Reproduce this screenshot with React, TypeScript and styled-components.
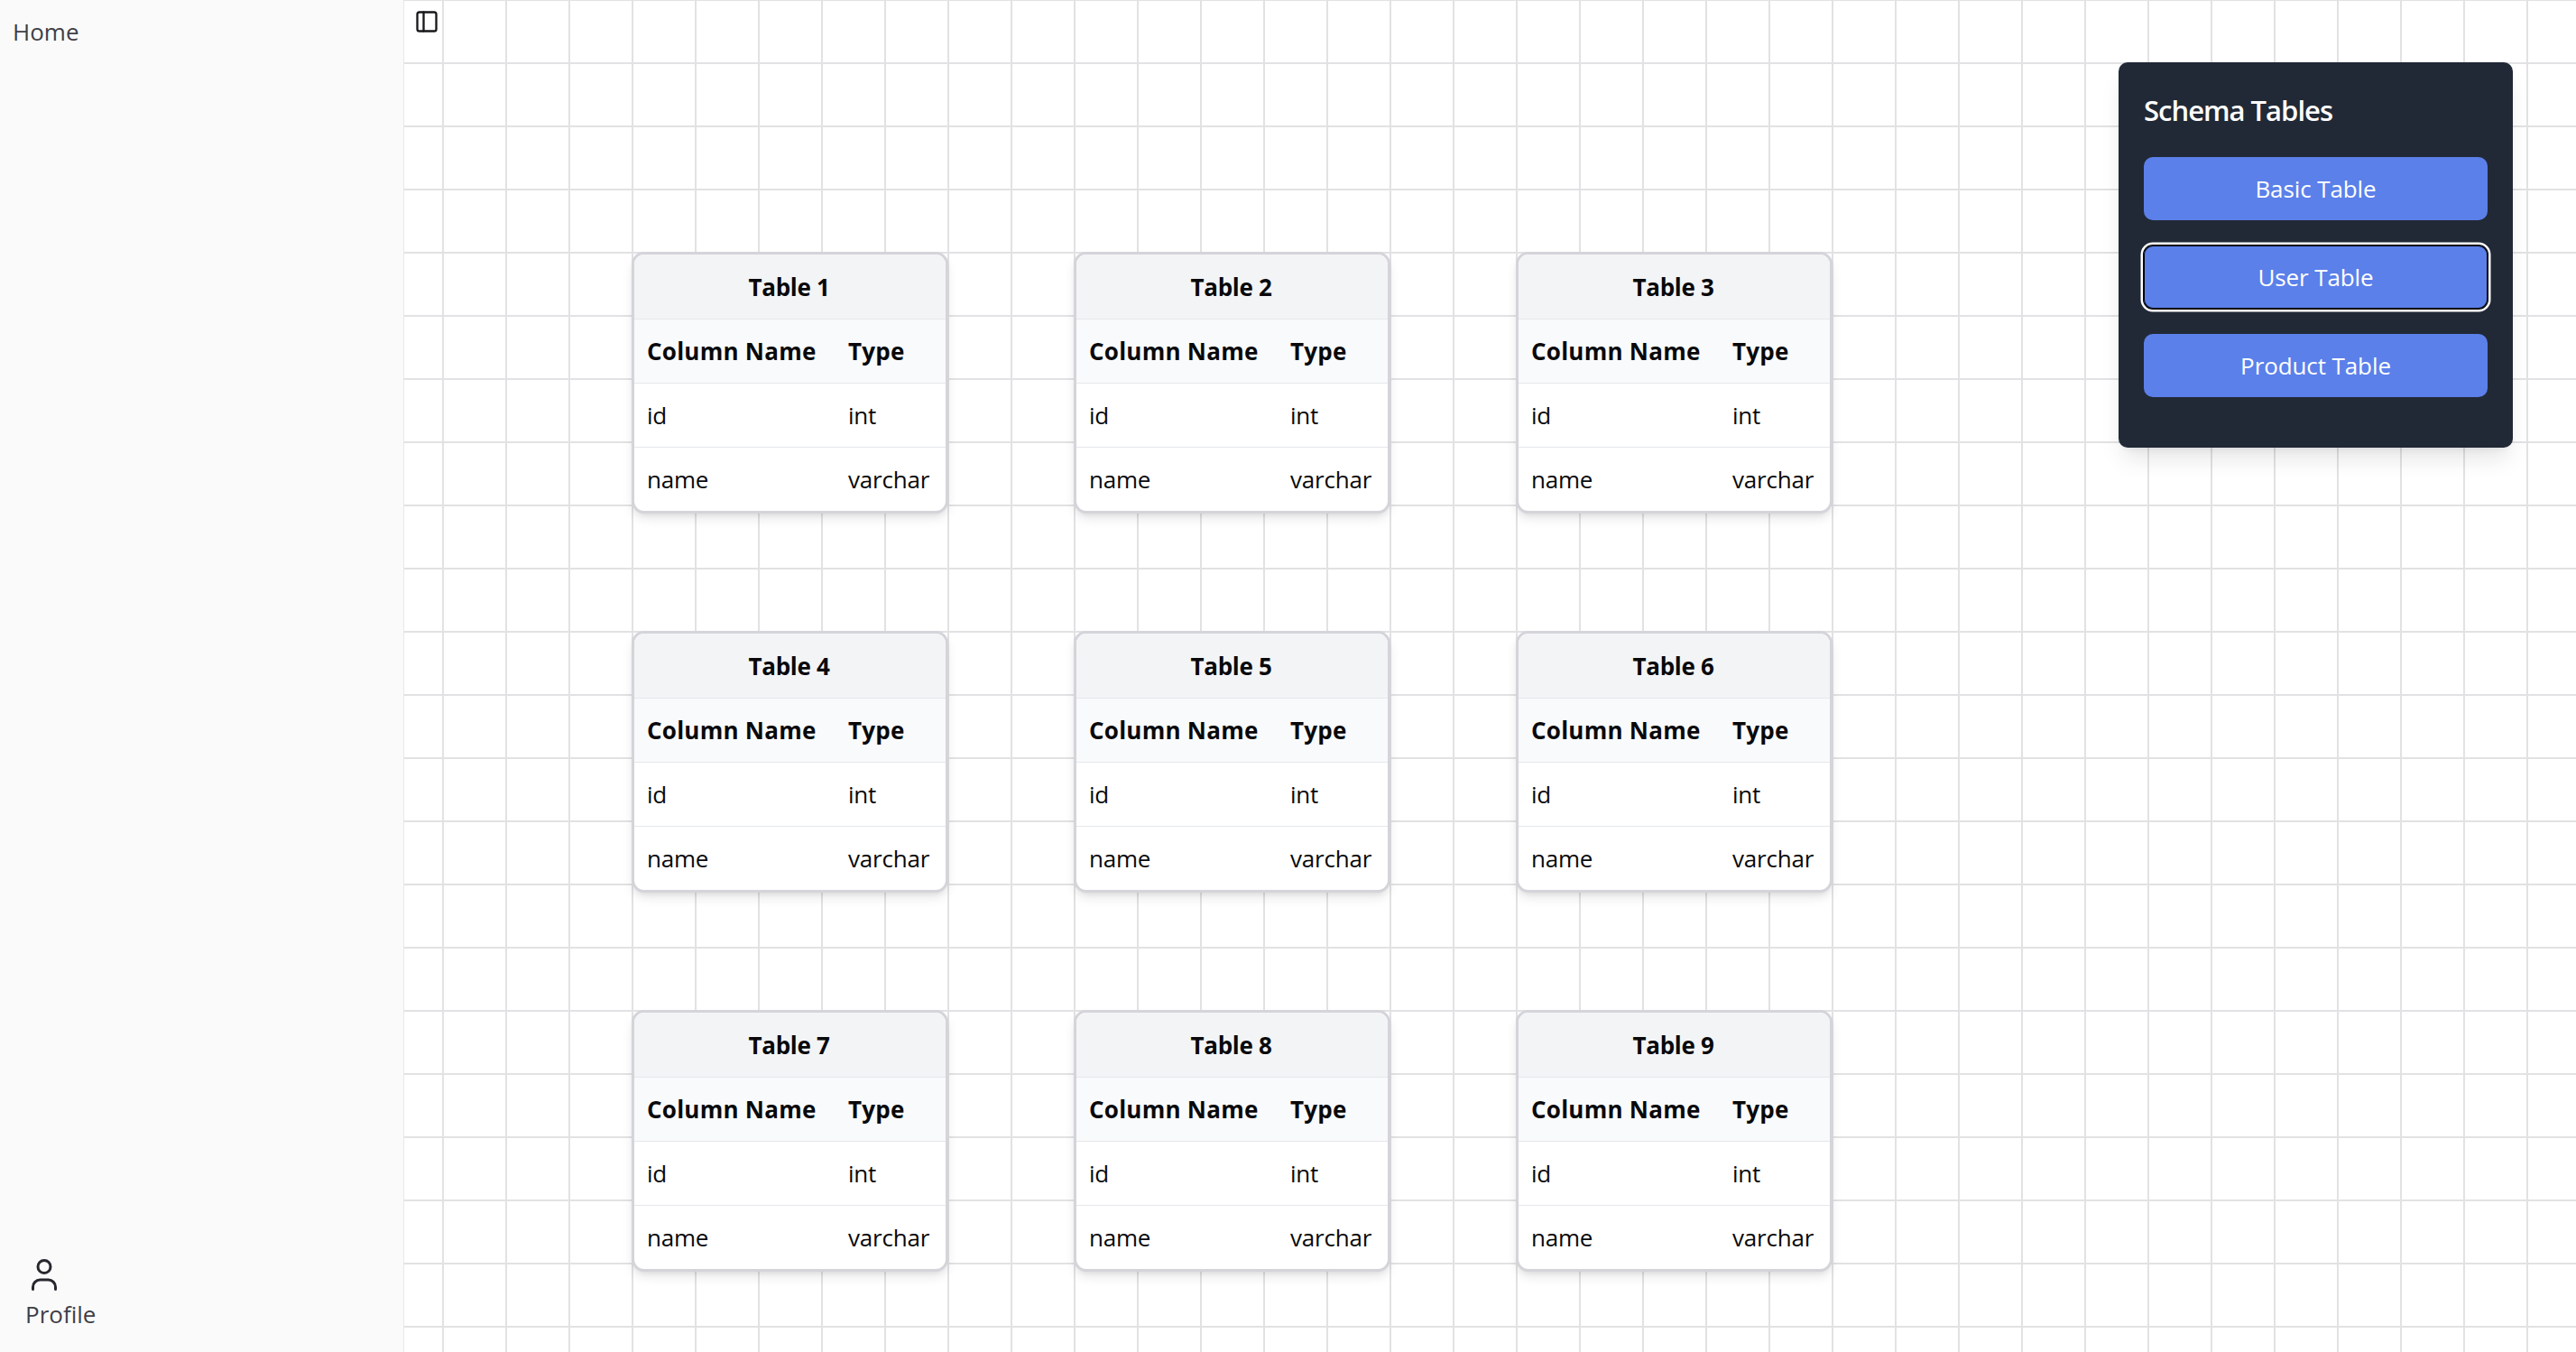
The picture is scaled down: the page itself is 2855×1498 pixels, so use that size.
import React from "react";
import styled, { createGlobalStyle } from "styled-components";
import { PanelLeft } from "lucide-react";

const Global = createGlobalStyle`
  html, body { margin: 0; padding: 0; height: 100%; overflow: hidden; }
  body {
    font-family: "Open Sans", "Noto Sans", "Liberation Sans", sans-serif;
    background-color: #fff;
    background-image:
      linear-gradient(to right, #e2e2e4 2px, transparent 2px),
      linear-gradient(to bottom, #e2e2e4 2px, transparent 2px);
    background-size: 70px 70px;
    background-position: 0 -1px;
  }
`;

const Page = styled.div`
  display: flex;
  width: 2855px;
  height: 1498px;
`;

const Sidebar = styled.aside`
  width: 448px;
  box-sizing: border-box;
  background: #fafafa;
  border-right: 1px solid #e8e8ea;
  display: flex;
  flex-direction: column;
  justify-content: space-between;
  color: #3f3f46;
  font-size: 26px;
`;

const HomeLink = styled.div`
  padding: 18px 14px;
  line-height: 34px;
`;

const ProfileBlock = styled.div`
  padding: 0 28px 25px;
  display: flex;
  flex-direction: column;
  align-items: flex-start;
  line-height: 34px;
`;

const ProfileIcon = styled.svg`
  display: block;
  width: 28px;
  height: 35px;
  margin: 0 0 9px 7px;
  color: #27272f;
`;

const Canvas = styled.main`
  position: relative;
  flex: 1;
`;

const ToggleButton = styled.button`
  position: absolute;
  left: 11px;
  top: 10px;
  width: 28px;
  height: 28px;
  padding: 0;
  border: 0;
  background: transparent;
  color: #18181b;
  svg { display: block; }
`;

const Card = styled.div<{ $col: number; $row: number }>`
  position: absolute;
  left: ${(p) => 252 + p.$col * 490}px;
  top: ${(p) => 279 + p.$row * 420}px;
  width: 351px;
  box-sizing: border-box;
  background: #fff;
  border: 3px solid #d4d4da;
  border-radius: 14px;
  box-shadow: 0 7px 13px -2px rgba(0, 0, 0, 0.1), 0 3px 7px -3px rgba(0, 0, 0, 0.1);
  overflow: hidden;
  color: #09090b;
`;

const CardTable = styled.table`
  width: 100%;
  border-collapse: collapse;
  table-layout: fixed;
  font-size: 26px;
`;

const TitleCell = styled.th`
  height: 70px;
  padding: 1px 2px 0 0;
  background: #f3f4f6;
  border-bottom: 1px solid #e5e7eb;
  font-weight: 700;
  letter-spacing: -0.3px;
  text-align: center;
`;

const HeadCell = styled.th`
  height: 70px;
  padding: 0 0 0 14px;
  background: #f9fafb;
  border-bottom: 1px solid #e5e7eb;
  font-weight: 700;
  letter-spacing: 0.25px;
  text-align: left;
  white-space: nowrap;
`;

const BodyCell = styled.td<{ $last?: boolean }>`
  height: 70px;
  padding: 0 0 0 14px;
  border-bottom: ${(p) => (p.$last ? "0" : "1px solid #e5e7eb")};
  letter-spacing: -0.2px;
  white-space: nowrap;
`;

const ColA = styled.col`
  width: 223px;
`;

const Panel = styled.section`
  position: absolute;
  top: 69px;
  right: 70px;
  width: 437px;
  box-sizing: border-box;
  padding: 28px;
  background: #212936;
  border-radius: 10px;
  box-shadow: 0 17px 26px -5px rgba(0, 0, 0, 0.1), 0 7px 10px -7px rgba(0, 0, 0, 0.1);
  color: #fff;
`;

const PanelTitle = styled.h2`
  margin: 0 0 28px;
  height: 49px;
  font-size: 31px;
  line-height: 51px;
  font-weight: 600;
  letter-spacing: -1px;
`;

const ActionButton = styled.button<{ $focused?: boolean }>`
  display: block;
  width: 100%;
  height: 70px;
  margin-bottom: 28px;
  padding: 0;
  border: 0;
  border-radius: 10px;
  background: #5b80ea;
  color: #fff;
  font-family: inherit;
  font-size: 26px;
  letter-spacing: -0.1px;
  box-shadow: ${(p) => (p.$focused ? "inset 0 0 0 1px #000, 0 0 0 1px #000, 0 0 0 3.5px #fff" : "none")};
`;

const tables = Array.from({ length: 9 }, (_, i) => i + 1);

function TableCard({ n }: { n: number }) {
  return (
    <Card $col={(n - 1) % 3} $row={Math.floor((n - 1) / 3)}>
      <CardTable>
        <colgroup>
          <ColA />
          <col />
        </colgroup>
        <thead>
          <tr>
            <TitleCell colSpan={2}>Table {n}</TitleCell>
          </tr>
          <tr>
            <HeadCell>Column Name</HeadCell>
            <HeadCell>Type</HeadCell>
          </tr>
        </thead>
        <tbody>
          <tr>
            <BodyCell>id</BodyCell>
            <BodyCell>int</BodyCell>
          </tr>
          <tr>
            <BodyCell $last>name</BodyCell>
            <BodyCell $last>varchar</BodyCell>
          </tr>
        </tbody>
      </CardTable>
    </Card>
  );
}

export default function App() {
  return (
    <Page>
      <Global />
      <Sidebar>
        <HomeLink>Home</HomeLink>
        <ProfileBlock>
          <ProfileIcon viewBox="0 0 28 35" fill="none" stroke="currentColor" strokeWidth={3} strokeLinecap="round" strokeLinejoin="round">
            <circle cx="14" cy="8.5" r="7" />
            <path d="M1.5 33.5v-2.5a8 8 0 0 1 8-8h9a8 8 0 0 1 8 8v2.5" />
          </ProfileIcon>
          <span>Profile</span>
        </ProfileBlock>
      </Sidebar>
      <Canvas>
        <ToggleButton aria-label="Toggle sidebar">
          <PanelLeft size={28} strokeWidth={2} />
        </ToggleButton>
        {tables.map((n) => (
          <TableCard key={n} n={n} />
        ))}
        <Panel>
          <PanelTitle>Schema Tables</PanelTitle>
          <ActionButton>Basic Table</ActionButton>
          <ActionButton $focused>User Table</ActionButton>
          <ActionButton>Product Table</ActionButton>
        </Panel>
      </Canvas>
    </Page>
  );
}
